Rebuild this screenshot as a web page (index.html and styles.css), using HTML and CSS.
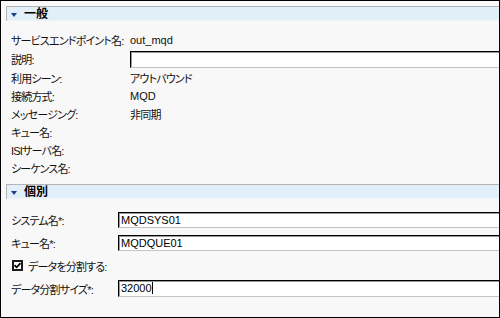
FILE: index.html
```html
<!DOCTYPE html>
<html lang="ja">
<head>
<meta charset="utf-8">
<link rel="stylesheet" href="styles.css">
</head>
<body>
<div class="frame">
  <section class="sec general">
    <div class="sec-head"><span class="tri"></span><span class="sec-title">一般</span></div>
    <div class="rows">
      <div class="row"><span class="label">サービスエンドポイント名:</span><span class="value latin">out_mqd</span></div>
      <div class="row tall"><span class="label">説明:</span><div class="field"></div></div>
      <div class="row"><span class="label">利用シーン:</span><span class="value">アウトバウンド</span></div>
      <div class="row"><span class="label">接続方式:</span><span class="value latin">MQD</span></div>
      <div class="row"><span class="label">メッセージング:</span><span class="value">非同期</span></div>
      <div class="row"><span class="label">キュー名:</span></div>
      <div class="row"><span class="label">ISIサーバ名:</span></div>
      <div class="row"><span class="label">シーケンス名:</span></div>
    </div>
  </section>
  <section class="sec specific">
    <div class="sec-head"><span class="tri"></span><span class="sec-title">個別</span></div>
    <div class="rows">
      <div class="row"><span class="label">システム名*:</span><div class="field">MQDSYS01</div></div>
      <div class="row"><span class="label">キュー名*:</span><div class="field">MQDQUE01</div></div>
      <div class="row check-row"><span class="checkbox"><svg width="7" height="7" viewBox="0 0 7 7"><path d="M0.5 3.2 L2.6 5.3 L6.5 1.2" fill="none" stroke="#000" stroke-width="1.8"/></svg></span><span class="check-label">データを分割する:</span></div>
      <div class="row"><span class="label">データ分割サイズ*:</span><div class="field tall-field">32000<span class="caret"></span></div></div>
    </div>
  </section>
</div>
</body>
</html>
```

FILE: styles.css
```css
html, body {
  margin: 0;
  padding: 0;
  background: #f8f8f8;
}

.frame {
  box-sizing: border-box;
  width: 500px;
  height: 318px;
  border: 1px solid #000;
  background: #f8f8f8;
  overflow: hidden;
  padding-top: 5px;
  font-family: "Liberation Sans", "Noto Sans CJK JP", sans-serif;
  font-size: 11px;
  color: #111;
  font-feature-settings: "palt" 1;
}

.sec-head {
  margin-left: 5px;
  height: 14px;
  border-top: 1px solid #b4b4b4;
  border-left: 1px solid #b4b4b4;
  background: linear-gradient(#e1eff9 0, #e1eff9 13px, #edf5fb 13px);
  display: flex;
  align-items: center;
  gap: 7px;
  padding-left: 4px;
}

.tri {
  width: 0;
  height: 0;
  border-left: 3.5px solid transparent;
  border-right: 3.5px solid transparent;
  border-top: 4px solid #1d3c8f;
  margin-top: 2px;
}

.sec-title {
  font-weight: bold;
  font-size: 12px;
  color: #000;
  line-height: 14px;
}

.rows {
  display: flex;
  flex-direction: column;
  padding-left: 10px;
}

.general .rows {
  padding-top: 10px;
}

.row {
  display: flex;
  align-items: center;
  height: 18px;
  white-space: nowrap;
}

.label,
.value,
.check-label {
  letter-spacing: -0.8px;
}

.value.latin {
  letter-spacing: 0;
}

.general .row.tall {
  height: 20px;
}

.general .label {
  width: 119px;
  flex: none;
}

.specific {
  margin-top: 7px;
}

.specific .rows {
  padding-top: 9px;
}

.specific .row {
  height: 23px;
}

.specific .label {
  width: 107px;
  flex: none;
}

.field {
  flex: none;
  box-sizing: border-box;
  width: 420px;
  height: 16px;
  background: #fff;
  border-top: 1px solid #000;
  border-left: 1px solid #000;
  border-bottom: 1px solid #c4c4c4;
  box-shadow: inset 1px 1px 0 #9a9a9a;
  padding-left: 2px;
  line-height: 14px;
  color: #000;
}

.general .field {
  height: 17px;
}

.tall-field {
  height: 17px;
  line-height: 15px;
}

.caret {
  display: inline-block;
  width: 1px;
  height: 12px;
  background: #000;
  vertical-align: -2px;
}

.check-row {
  gap: 5px;
}

.checkbox {
  box-sizing: border-box;
  width: 11px;
  height: 11px;
  margin-left: 1px;
  border: 2px solid #1c1c1c;
  background: #fff;
  display: flex;
  align-items: center;
  justify-content: center;
}

.checkbox svg {
  display: block;
}
```
